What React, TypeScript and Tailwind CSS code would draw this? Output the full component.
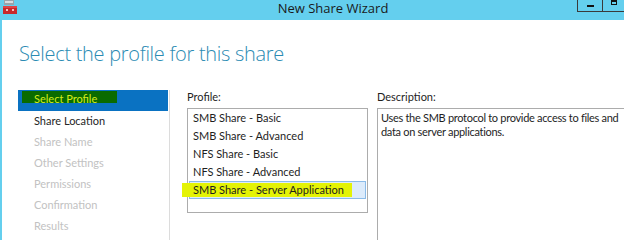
import React from "react";

const navItems = [
  { label: "Share Location", active: true },
  { label: "Share Name", active: false },
  { label: "Other Settings", active: false },
  { label: "Permissions", active: false },
  { label: "Confirmation", active: false },
  { label: "Results", active: false },
];

const profiles = [
  "SMB Share - Basic",
  "SMB Share - Advanced",
  "NFS Share - Basic",
  "NFS Share - Advanced",
];

export default function App() {
  const font = { fontFamily: 'Lato, "Open Sans", sans-serif' };
  return (
    <div className="w-[624px] h-[240px] bg-white overflow-hidden flex flex-col" style={font}>
      {/* Title bar */}
      <div className="relative h-[20px] bg-[#64cfee] flex items-center justify-center shrink-0">
        <svg className="absolute left-[3px] top-0" width="14" height="14" viewBox="0 0 14 14">
          <rect x="1" y="0" width="10" height="5" fill="#9aa3ab" />
          <rect x="2" y="1" width="8" height="2" fill="#d7dde2" />
          <rect x="0" y="6" width="14" height="8" fill="#c8282a" />
          <rect x="0" y="6" width="14" height="2" fill="#e04446" />
          <rect x="3" y="9" width="2" height="2" fill="#f3c0c0" />
          <rect x="9" y="9" width="2" height="2" fill="#f3c0c0" />
        </svg>
        <span
          className="text-[13px] text-[#1a1a1a] ml-[42px] -mt-[3px]"
          style={{ fontFamily: '"Open Sans", sans-serif' }}
        >
          New Share Wizard
        </span>
        <div className="absolute right-[-2px] top-[-1px] h-[13px] flex border border-[#3a3a3a] border-t-0">
          <div className="w-[25px] h-full flex items-center justify-center border-r border-[#3a3a3a]">
            <div className="w-[7px] h-[2px] bg-[#111] mt-[2px]" />
          </div>
          <div className="w-[22px] h-full flex items-start justify-center pt-[1px]">
            <div className="w-[6px] h-[5px] border border-[#111] border-t-2" />
          </div>
        </div>
      </div>

      {/* Body */}
      <div className="flex-1 flex flex-col border-l-2 border-[#64cfee] min-h-0">
        <div
          className="pl-[17px] pt-[20px] h-[70px] shrink-0 text-[20px] font-light text-[#2b8bb3] leading-[28px] tracking-[-0.3px] whitespace-nowrap"
          style={{ fontFamily: '"Open Sans", sans-serif' }}
        >
          Select the profile for this share
        </div>
        <div className="flex flex-1 pl-[16px] min-h-0">
          {/* Nav */}
          <div className="w-[150px] shrink-0 flex flex-col text-[11px]">
            <div className="relative h-[21px] bg-[#0a72c2] flex items-center pl-[16px]">
              <div className="absolute left-[4px] top-[1px] w-[95px] h-[12px] bg-[#0a6b00]" />
              <span className="relative text-[#d4ec1a] mt-[-2px]">Select Profile</span>
            </div>
            {navItems.map((n) => (
              <div
                key={n.label}
                className={`h-[21px] flex items-center pl-[16px] whitespace-nowrap ${n.active ? "text-[#262626]" : "text-[#c2c2c2]"}`}
              >
                {n.label}
              </div>
            ))}
          </div>
          <div className="w-px shrink-0 bg-[#dcdcdc] ml-px" />
          {/* Profile */}
          <div className="ml-[17px] w-[181px] shrink-0 flex flex-col text-[11px] text-[#1e1e1e]">
            <div className="h-[18px] leading-[14px]">Profile:</div>
            <div className="h-[105px] border border-[#acacac] flex flex-col">
              {profiles.map((p) => (
                <div key={p} className="h-[18px] flex items-center pl-[5px] whitespace-nowrap">
                  {p}
                </div>
              ))}
              <div className="relative h-[18px] mx-px bg-[#dcebfb] border border-[#8bbbe8] flex items-center pl-[3px] whitespace-nowrap">
                <div className="absolute left-[-8px] top-[1px] w-[170px] h-[14px] bg-[#e4f306]" />
                <span className="relative">SMB Share - Server Application</span>
              </div>
            </div>
          </div>
          {/* Description */}
          <div className="ml-[9px] flex-1 min-w-0 flex flex-col text-[11px] text-[#1e1e1e]">
            <div className="h-[18px] leading-[14px]">Description:</div>
            <div className="flex-1 border border-[#acacac] border-r-0 border-b-0 pl-[3px] pt-[2px] leading-[14px] whitespace-nowrap tracking-[-0.3px]">
              Uses the SMB protocol to provide access to files and
              <br />
              data on server applications.
            </div>
          </div>
        </div>
      </div>
    </div>
  );
}
